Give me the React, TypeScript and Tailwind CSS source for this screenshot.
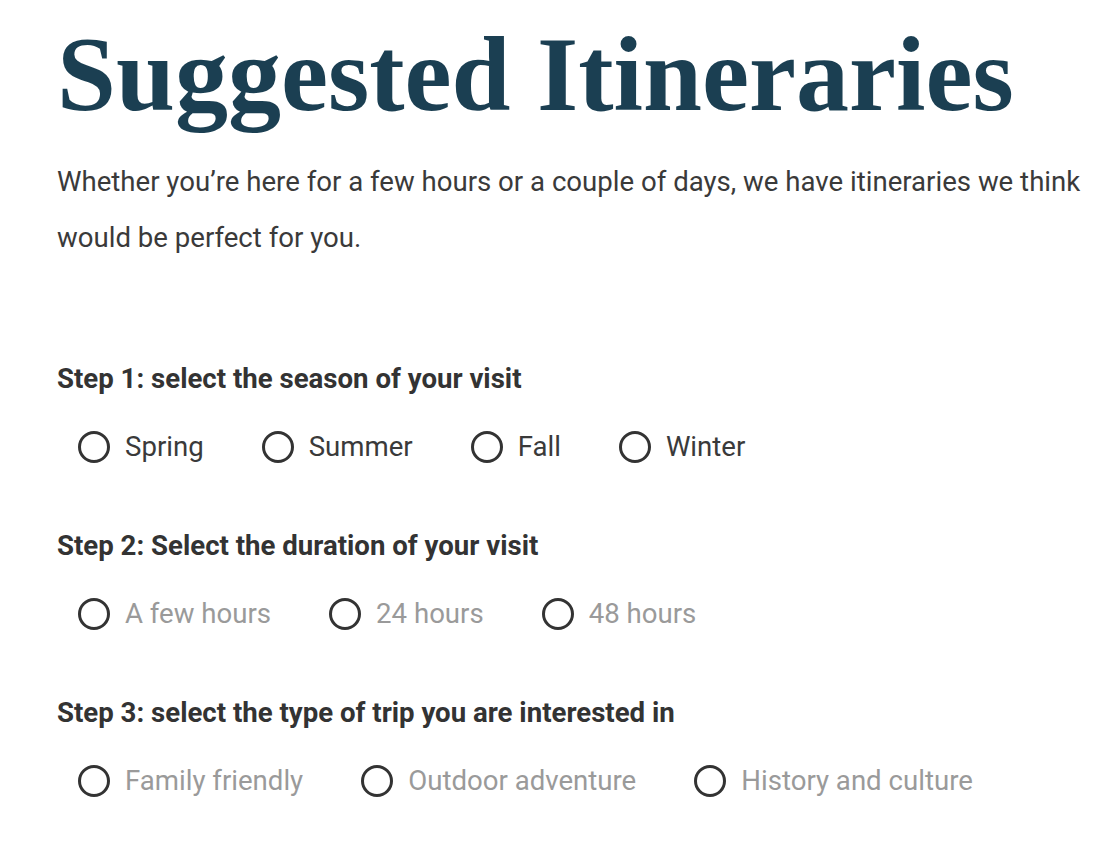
import React from "react";

type Option = { label: string; muted?: boolean };

const steps: { title: string; options: string[]; muted: boolean }[] = [
  { title: "Step 1: select the season of your visit", options: ["Spring", "Summer", "Fall", "Winter"], muted: false },
  { title: "Step 2: Select the duration of your visit", options: ["A few hours", "24 hours", "48 hours"], muted: true },
  {
    title: "Step 3: select the type of trip you are interested in",
    options: ["Family friendly", "Outdoor adventure", "History and culture"],
    muted: true,
  },
];

function Radio({ label, muted }: Option) {
  return (
    <label className="mr-[58px] flex items-center gap-[15px]">
      <span className="h-[32px] w-[32px] rounded-full border-[3px] border-[#333333]" />
      <span className={muted ? "text-[#9a9a9a]" : "text-[#3a3a3a]"}>{label}</span>
    </label>
  );
}

export default function App() {
  return (
    <main
      className="min-h-screen bg-white pl-[57px] pr-4 pt-[20px]"
      style={{ fontFamily: "Roboto, 'Liberation Sans', sans-serif" }}
    >
      <h1
        className="text-[106px] font-bold leading-[110px] text-[#1b3f52]"
        style={{ fontFamily: "'Liberation Serif', serif" }}
      >
        Suggested Itineraries
      </h1>
      <p className="mt-[24px] pr-[6px] text-[27.6px] leading-[56px] text-[#3a3a3a]">
        Whether you’re here for a few hours or a couple of days, we have itineraries we think would be perfect for you.
      </p>

      <div className="mt-[97px] flex flex-col gap-[67px]">
        {steps.map((s) => (
          <section key={s.title}>
            <h2 className="text-[27.6px] font-bold leading-[32px] text-[#333333]">{s.title}</h2>
            <div className="mt-[36px] flex pl-[21px] text-[27.6px] leading-[32px]">
              {s.options.map((o) => (
                <Radio key={o} label={o} muted={s.muted} />
              ))}
            </div>
          </section>
        ))}
      </div>
    </main>
  );
}
